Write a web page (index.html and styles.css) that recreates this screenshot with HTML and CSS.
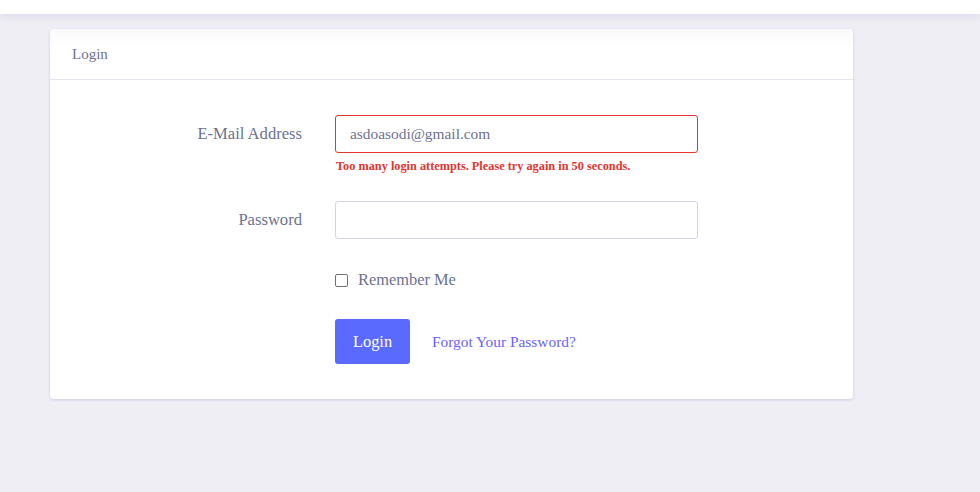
FILE: index.html
```html
<!DOCTYPE html>
<html>
<head>
<meta charset="utf-8">
<link rel="stylesheet" href="styles.css">
</head>
<body>
<nav class="navbar"></nav>
<main class="main">
  <div class="card">
    <div class="card-header">Login</div>
    <div class="card-body">
      <form class="form">
        <div class="row row-email">
          <label class="label">E-Mail Address</label>
          <div class="field">
            <input class="input input-invalid" type="text" value="asdoasodi@gmail.com">
            <div class="error">Too many login attempts. Please try again in 50 seconds.</div>
          </div>
        </div>
        <div class="row row-password">
          <label class="label">Password</label>
          <div class="field">
            <input class="input" type="password">
          </div>
        </div>
        <div class="row row-remember">
          <div class="label"></div>
          <div class="field check">
            <span class="checkbox"></span>
            <span class="check-label">Remember Me</span>
          </div>
        </div>
        <div class="row row-actions">
          <div class="label"></div>
          <div class="field actions">
            <button class="btn" type="button">Login</button>
            <a class="link" href="#">Forgot Your Password?</a>
          </div>
        </div>
      </form>
    </div>
  </div>
</main>
</body>
</html>
```
FILE: styles.css
```css
* { box-sizing: border-box; }
html, body { margin: 0; padding: 0; }
body {
  background: #efeef5;
  font-family: "Liberation Serif", "Times New Roman", serif;
  color: #6c7293;
  height: 492px;
  overflow: hidden;
}
.navbar {
  height: 14px;
  background: #ffffff;
  box-shadow: 0 2px 10px rgba(120, 110, 170, 0.18);
  position: relative;
  z-index: 1;
}
.main {
  padding: 15px 0 0 50px;
}
.card {
  width: 803px;
  background: #ffffff;
  border-radius: 4px;
  box-shadow: 0 1px 3px rgba(110, 100, 170, 0.25);
}
.card-header {
  height: 51px;
  padding: 16px 0 0 22px;
  font-size: 15px;
  line-height: 18px;
  color: #6c7293;
  border-bottom: 1px solid #e6e4ee;
  background: linear-gradient(#fafafc, #ffffff 40%);
  border-radius: 4px 4px 0 0;
}
.card-body {
  padding: 35px 0 35px 0;
}
.row {
  display: flex;
  align-items: flex-start;
}
.label {
  width: 252px;
  text-align: right;
  font-size: 16.6px;
  line-height: 38px;
  height: 38px;
  color: #6c7293;
  flex: none;
}
.field {
  margin-left: 33px;
  width: 363px;
}
.input {
  display: block;
  width: 363px;
  height: 38px;
  border: 1px solid #d6d2e6;
  border-radius: 3px;
  padding: 0 14px;
  font-family: "Liberation Serif", "Times New Roman", serif;
  font-size: 15.4px;
  color: #6c7293;
  background: #fff;
  outline: none;
}
.input-invalid {
  border-color: #e3342f;
}
.error {
  margin-top: 5px;
  font-size: 12.3px;
  line-height: 16px;
  font-weight: bold;
  color: #e3342f;
  padding-left: 1px;
}
.row-email { margin-bottom: 27px; }
.row-password { margin-bottom: 29px; }
.row-remember .label { height: 24px; line-height: 24px; }
.check {
  display: flex;
  align-items: center;
  height: 24px;
}
.checkbox {
  width: 13px;
  height: 13px;
  border: 1px solid #707070;
  border-radius: 2px;
  background: #fff;
  flex: none;
}
.check-label {
  margin-left: 10px;
  font-size: 16.4px;
  color: #6c7293;
}
.row-remember { margin-bottom: 27px; }
.row-actions .label { height: 45px; }
.actions {
  display: flex;
  align-items: center;
  height: 45px;
}
.btn {
  width: 75px;
  height: 45px;
  border: none;
  border-radius: 3px;
  background: #5a6aff;
  color: #ffffff;
  font-family: "Liberation Serif", "Times New Roman", serif;
  font-size: 16.4px;
  padding: 0;
}
.link {
  margin-left: 22px;
  font-size: 15.4px;
  color: #6a5fff;
  text-decoration: none;
}
```
